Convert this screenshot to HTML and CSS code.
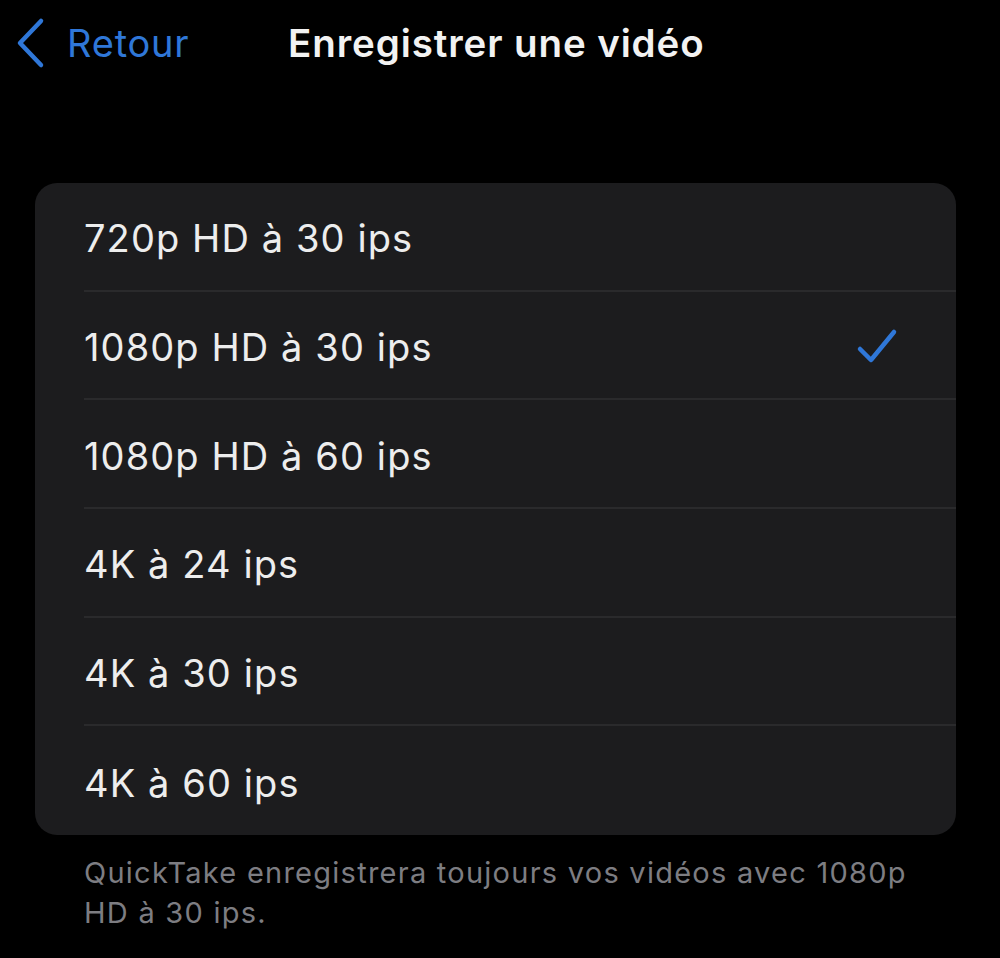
FILE: index.html
```html
<!DOCTYPE html>
<html lang="fr">
<head>
<meta charset="utf-8">
<title>Enregistrer une vidéo</title>
<link rel="stylesheet" href="styles.css">
</head>
<body>
<div class="screen">
  <header class="nav">
    <a class="back" href="#">
      <svg class="chev" width="34" height="54" viewBox="0 0 34 54"><path d="M27 5 L6 27 L27 49" fill="none" stroke="#2f77d8" stroke-width="4.5" stroke-linecap="round" stroke-linejoin="round"/></svg>
      <span>Retour</span>
    </a>
    <h1 class="title">Enregistrer une vidéo</h1>
  </header>

  <section class="card">
    <div class="row"><div class="row-inner"><span>720p HD à 30 ips</span></div></div>
    <div class="row"><div class="row-inner"><span>1080p HD à 30 ips</span>
      <svg class="check" width="44" height="40" viewBox="0 0 44 40"><path d="M4 22 L15 33 L38 5" fill="none" stroke="#2f77d8" stroke-width="4.5" stroke-linecap="round" stroke-linejoin="round"/></svg>
    </div></div>
    <div class="row"><div class="row-inner"><span>1080p HD à 60 ips</span></div></div>
    <div class="row"><div class="row-inner"><span>4K à 24 ips</span></div></div>
    <div class="row"><div class="row-inner"><span>4K à 30 ips</span></div></div>
    <div class="row last"><div class="row-inner"><span>4K à 60 ips</span></div></div>
  </section>

  <p class="footnote">QuickTake enregistrera toujours vos vidéos avec 1080p HD à 30 ips.</p>
</div>
</body>
</html>
```
FILE: styles.css
```css
html, body {
  margin: 0;
  padding: 0;
  background: #000;
}
body {
  font-family: Inter, "Liberation Sans", sans-serif;
  color: #ededed;
  width: 1000px;
  height: 958px;
  overflow: hidden;
}
.screen {
  display: flex;
  flex-direction: column;
}
.nav {
  height: 86px;
  display: flex;
  align-items: center;
}
.back {
  display: flex;
  align-items: center;
  gap: 19px;
  padding-left: 14px;
  color: #2f77d8;
  text-decoration: none;
  font-size: 38px;
  font-weight: 400;
  letter-spacing: 0.8px;
  width: 288px;
  box-sizing: border-box;
}
.chev {
  display: block;
}
.title {
  margin: 0;
  font-size: 38.5px;
  font-weight: 600;
  color: #f2f2f2;
  letter-spacing: 0.9px;
}
.card {
  margin: 97px 0 0 35px;
  width: 921px;
  background: #1c1c1e;
  border-radius: 22px;
  overflow: hidden;
}
.row {
  height: 108.7px;
  padding-left: 49px;
  display: flex;
}
.row-inner {
  flex: 1;
  display: flex;
  align-items: center;
  justify-content: space-between;
  padding-right: 56px;
  padding-top: 4px;
  box-sizing: border-box;
  border-bottom: 2px solid #2a2a2c;
  font-size: 38px;
  font-weight: 400;
  letter-spacing: 1.1px;
}
.row.last .row-inner {
  border-bottom: none;
}
.check {
  display: block;
}
.footnote {
  margin: 18px 0 0 84px;
  width: 840px;
  font-size: 29px;
  line-height: 40px;
  letter-spacing: 1.25px;
  color: #7d7d82;
}
```
